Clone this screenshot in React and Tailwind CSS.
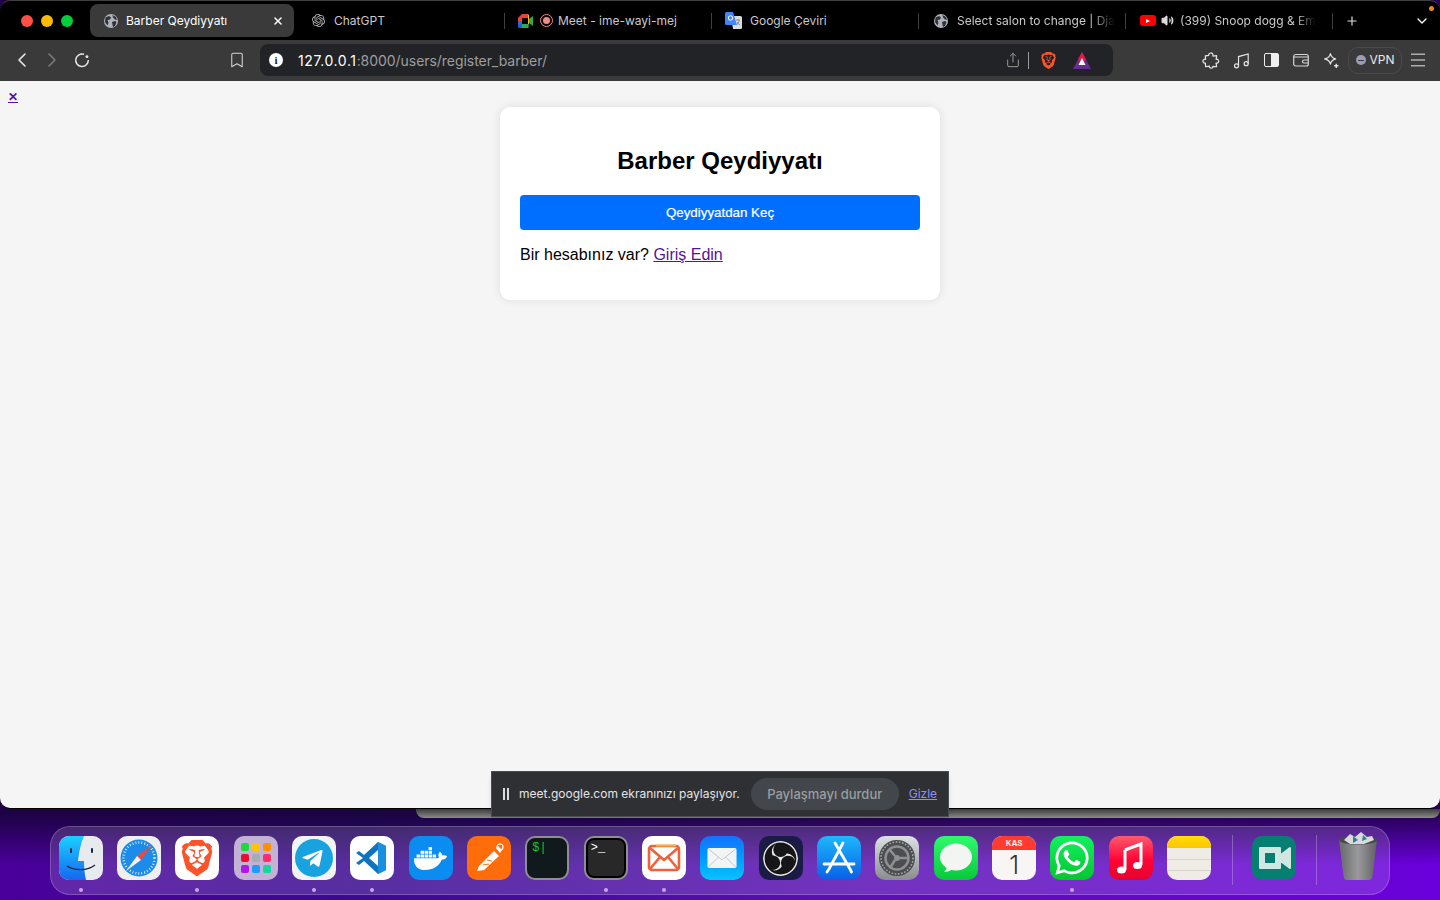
import React from 'react'
import { ChevronLeft, ChevronRight, ChevronDown, Bookmark, Share, Menu, Plus, X, Volume2 } from 'lucide-react'
import { FaDocker, FaWhatsapp, FaTelegramPlane } from 'react-icons/fa'
import { SiBrave, SiOpenai, SiObsstudio } from 'react-icons/si'

const sans = 'font-["Inter","Noto_Sans",sans-serif]'

const Globe = () => (
  <svg width="16" height="16" viewBox="0 0 16 16">
    <circle cx="8" cy="8" r="7" fill="#aeb2bb" />
    <path d="M2.500 4.500 6 3l2 1.500-1 2-2.500 .5 1 2.500-1 3L2 9zM9.500 2 13 4l1 3-2-.5-2-2zM9 9l3-1 1.500 1-1.500 4-2 1z" fill="#2f3136" />
  </svg>
)

const MeetLogo = () => (
  <svg width="16" height="14" viewBox="0 0 16 14">
    <path d="M0 4 4 0h6v4H4v3H0z" fill="#ea4335" />
    <path d="M0 7h4v3H0z" fill="#1a73e8" />
    <path d="M0 10h4v4H1.500A1.500 1.500 0 0 1 0 12.500z" fill="#1967d2" />
    <path d="M4 10h6v4H4z" fill="#34a853" />
    <path d="M10 0v4h1V1.500A1.500 1.500 0 0 0 9.500 0z" fill="#fbbc04" />
    <path d="M10 4h1v6h-1z" fill="#fbbc04" />
    <path d="M10 10h1v2.500a1.500 1.500 0 0 1-1.500 1.500H10z" fill="#188038" />
    <path d="M11 5l4-3v10l-4-3z" fill="#34a853" />
  </svg>
)

const TranslateLogo = () => (
  <svg width="17" height="17" viewBox="0 0 17 17">
    <path d="M6 4h9.500A1.500 1.500 0 0 1 17 5.500v10a1.500 1.500 0 0 1-1.500 1.500H8z" fill="#dadce0" />
    <path d="M1.500 0H8l4 13H1.500A1.500 1.500 0 0 1 0 11.500v-10A1.500 1.500 0 0 1 1.500 0z" fill="#4285f4" />
    <path d="M11 8h4M13 7v1M11.500 13c1.500-1 2.500-3 2.700-5M12 10c.7 1.300 1.600 2.300 3 3" stroke="#80868b" strokeWidth="0.900" fill="none" />
    <circle cx="5.500" cy="6" r="2.200" fill="none" stroke="#fff" strokeWidth="1" />
  </svg>
)

const tabClass = 'flex h-[16px] w-[207px] shrink-0 items-center border-r border-[#3f3f41]'

const TabBar = () => (
  <div className={`${sans} flex h-[40px] items-center rounded-t-[10px] border-t border-[#3f3f41] bg-black pl-[21px]`}>
    <div className="flex w-[69px] gap-2">
      <span className="h-3 w-3 rounded-full bg-[#ff4f46]" />
      <span className="h-3 w-3 rounded-full bg-[#ffbb00]" />
      <span className="h-3 w-3 rounded-full bg-[#00cf3b]" />
    </div>
    <div className="flex h-[33px] w-[204px] items-center rounded-lg bg-[#3a3a3b] pl-[13px] pr-[10px]">
      <Globe />
      <span className="ml-[7px] flex-1 text-[12px] text-white">Barber Qeydiyyatı</span>
      <X size={12} strokeWidth={3} color="#fff" />
    </div>
    <div className="ml-1 flex items-center">
      <div className={`${tabClass} pl-[14px]`}>
        <SiOpenai size={13} color="#b9b9bb" className="mr-[9px]" />
        <span className="text-[12px] text-[#c9c9cb]">ChatGPT</span>
      </div>
      <div className={`${tabClass} pl-[13px]`}>
        <MeetLogo />
        <span className="ml-[6px] mr-[5px] flex h-[13px] w-[13px] items-center justify-center rounded-full border border-[#f28b82]"><span className="h-[7px] w-[7px] rounded-full bg-[#f28b82]" /></span>
        <span className="text-[12px] text-[#c9c9cb]">Meet - ime-wayi-mej</span>
      </div>
      <div className={`${tabClass} pl-[13px]`}>
        <TranslateLogo />
        <span className="ml-[8px] text-[12px] text-[#c9c9cb]">Google Çeviri</span>
      </div>
      <div className={`${tabClass} pl-[14px]`}>
        <Globe />
        <span className="ml-2 whitespace-nowrap text-[12px] text-[#c9c9cb] mask-r-from-85%">Select salon to change | Dja</span>
      </div>
      <div className={`${tabClass} pl-[14px]`}>
        <span className="flex h-[11px] w-[16px] items-center justify-center rounded-[3px] bg-[#ff0000]"><span className="h-0 w-0 border-y-[2.500px] border-l-[4px] border-y-transparent border-l-white" /></span>
        <Volume2 size={13} color="#ddd" fill="#ddd" className="ml-[5px] mr-[6px]" />
        <span className="whitespace-nowrap text-[12px] text-[#c9c9cb] mask-r-from-85%">(399) Snoop dogg &amp; Em</span>
      </div>
    </div>
    <Plus size={14} color="#ddd" className="ml-3" />
    <ChevronDown size={16} color="#fff" className="ml-[55px]" />
  </div>
)

const ToolBtn = ({ children }) => <div className="flex h-[30px] w-[30px] shrink-0 items-center justify-center">{children}</div>

const Reload = () => (
  <svg width="18" height="18" viewBox="0 0 16 16" fill="none" stroke="#e8e8e8" strokeWidth="1.300">
    <path d="M9.800 2.900A5.600 5.600 0 1 0 13.600 8" />
    <circle cx="12.400" cy="5" r="1.300" fill="#e8e8e8" stroke="none" />
  </svg>
)

const PuzzleIcon = () => (
  <svg width="18" height="18" viewBox="0 0 16 16" fill="none" stroke="#e6e6e7" strokeWidth="1.100" strokeLinejoin="round">
    <path d="M6 3.800C5.800 1.300 9.800 1 9.700 3.500L9.800 4.500 13 4.200 12.600 7.400C14.800 6.900 15.500 9.800 13.800 10.700 13.300 11 12.900 10.900 12.500 10.700L13 14 9.700 13.700C10.200 15.600 6.800 15.900 6.500 13.900L6.600 13.500 3.200 14 3 10.700C.8 11.100 .2 8.300 1.700 7.500 2.200 7.200 2.700 7.300 3.100 7.500L3 4.300z" />
  </svg>
)

const MusicIcon = () => (
  <svg width="17" height="17" viewBox="0 0 16 16" fill="none" stroke="#e6e6e7" strokeWidth="1.100">
    <path d="M5.200 13V4.300L14.300 1.800V11" />
    <circle cx="3.300" cy="13" r="1.900" />
    <circle cx="12.400" cy="11" r="1.900" />
  </svg>
)

const Wallet = () => (
  <svg width="16" height="14" viewBox="0 0 16 14" fill="none" stroke="#d5d5d6" strokeWidth="1.200">
    <rect x="0.700" y="1.500" width="14.600" height="11.500" rx="2" />
    <path d="M1 4h14M15 7h-4a1.500 1.500 0 0 0 0 3h4" />
  </svg>
)

const Sparkle = () => (
  <svg width="17" height="17" viewBox="0 0 16 16" fill="none" stroke="#e6e6e7" strokeWidth="1.100">
    <path d="M7 1.500c.6 3 1.800 4.300 5 5-3.200.7-4.400 2-5 5-.6-3-1.800-4.300-5.500-5 3.700-.7 4.900-2 5.500-5z" strokeLinejoin="round" />
    <path d="M12.500 11v4M10.500 13h4" strokeWidth="1.300" />
  </svg>
)

const Toolbar = () => (
  <div className={`${sans} flex h-[41px] items-center bg-[#3a3a3b] pb-px pl-[7px]`}>
    <ToolBtn><ChevronLeft size={24} color="#e8e8e8" strokeWidth={1.600} /></ToolBtn>
    <ToolBtn><ChevronRight size={24} color="#7a7a7b" strokeWidth={1.600} /></ToolBtn>
    <ToolBtn><Reload /></ToolBtn>
    <div className="ml-[125px]"><ToolBtn><Bookmark size={18} color="#d5d5d6" strokeWidth={1.400} /></ToolBtn></div>
    <div className="ml-2 flex h-[32px] w-[853px] shrink-0 items-center rounded-lg bg-[#222326] pl-[9px]">
      <span className="flex h-[14px] w-[14px] items-center justify-center rounded-full bg-white font-['Liberation_Serif',serif] text-[11px] font-bold leading-none text-[#222326]">i</span>
      <span className="ml-[15px] text-[14px] tracking-[0.6px] text-white">127.0.0.1<span className="tracking-[-0.05px] text-[#9d9ea0]">:8000/users/register_barber/</span></span>
      <div className="ml-auto flex items-center">
        <Share size={16} color="#a0a1a3" strokeWidth={1.400} />
        <span className="ml-[7px] h-[17px] w-px bg-[#9a9b9d]" />
        <SiBrave size={17} color="#fb542b" className="ml-[11px]" />
        <svg width="18" height="17" viewBox="0 0 18 17" className="ml-[16px] mr-[22px]">
          <path d="M9 0 18 17H0z" fill="#662d91" />
          <path d="M9 0 13.500 8.500H4.500z" fill="#e6194b" />
          <path d="M9 6l3.500 7h-7z" fill="#fff" />
        </svg>
      </div>
    </div>
    <div className="ml-[83px] flex items-center">
      <ToolBtn><PuzzleIcon /></ToolBtn>
      <ToolBtn><MusicIcon /></ToolBtn>
      <ToolBtn>
        <span className="flex h-[14px] w-[15px] rounded-[2px] border-[1.500px] border-[#efefef]"><span className="w-1/2" /><span className="w-1/2 bg-[#efefef]" /></span>
      </ToolBtn>
      <ToolBtn><Wallet /></ToolBtn>
      <ToolBtn><Sparkle /></ToolBtn>
    </div>
    <div className="ml-[2px] flex h-[27px] w-[54px] shrink-0 items-center justify-center gap-1 rounded-[10px] border border-[#4a4a4b]">
      <span className="flex h-[10px] w-[10px] items-center justify-center rounded-full bg-[#9a9db8]"><span className="h-px w-[6px] bg-[#3a3a3b]" /></span>
      <span className="text-[12px] text-[#e8e8e9]">VPN</span>
    </div>
    <div className="ml-px"><ToolBtn><Menu size={20} color="#e8e8e8" strokeWidth={1.200} /></ToolBtn></div>
  </div>
)

const Finder = () => (
  <svg viewBox="0 0 44 44" className="h-11 w-11">
    <defs>
      <linearGradient id="fb" x1="0" y1="0" x2="0" y2="1"><stop offset="0" stopColor="#1bd0ff" /><stop offset="1" stopColor="#1567ef" /></linearGradient>
    </defs>
    <rect width="44" height="44" rx="10" fill="#e8ebee" />
    <path d="M10 0h15c-3 7-5 15-6 25h6c0 6 .5 13 2 19H10A10 10 0 0 1 0 34V10A10 10 0 0 1 10 0z" fill="url(#fb)" />
    <rect x="11" y="12" width="2" height="5" rx="1" fill="#12263f" />
    <rect x="32" y="12" width="2" height="5" rx="1" fill="#12263f" />
    <path d="M8 30c8 5 20 5 28-1" fill="none" stroke="#12263f" strokeWidth="1.300" />
  </svg>
)

const Safari = () => (
  <svg viewBox="0 0 44 44" className="h-11 w-11">
    <rect width="44" height="44" rx="10" fill="#eef0f0" />
    <circle cx="22" cy="22" r="18.500" fill="#1d8bea" />
    <circle cx="22" cy="22" r="15.500" fill="none" stroke="#fff" strokeWidth="2.500" strokeDasharray="0.800 2.200" />
    <path d="M35 9 24 24 20 20z" fill="#f0473c" />
    <path d="M9 35 20 20l4 4z" fill="#f4f4f4" />
  </svg>
)

const Launchpad = () => {
  const colors = ['#1ed83f', '#ffc400', '#ff9100', '#e8112d', '#a7acb2', '#ff2d6b', '#b416e8', '#1b9dfb', '#0fd9a0']
  return (
    <div className="grid h-11 w-11 grid-cols-3 content-center justify-center gap-[3px] rounded-[10px] bg-[#c2b3d6] px-[7px]">
      {colors.map((c) => <span key={c} className="h-[8px] w-[8px] rounded-[2px]" style={{ background: c }} />)}
    </div>
  )
}

const Telegram = () => (
  <div className="flex h-11 w-11 items-center justify-center rounded-[10px] bg-[#f2f3f3]">
    <div className="flex h-[38px] w-[38px] items-center justify-center rounded-full bg-[#18a3e0]"><FaTelegramPlane size={23} color="#fff" className="-ml-[2px]" /></div>
  </div>
)

const VsCode = () => (
  <svg viewBox="0 0 44 44" className="h-11 w-11">
    <rect width="44" height="44" rx="10" fill="#fff" />
    <path d="M28 6 36 10v24l-8 4L14 25l-5 4-3-2 7-5-7-5 3-2 5 4z" fill="#0f74c0" />
    <path d="M28 6 36 10v24l-8 4V15l-9 7 9 7" fill="#1a8fe0" />
    <path d="M28 14v16l-9-8z" fill="#fff" />
  </svg>
)

const Docker = () => <div className="flex h-11 w-11 items-center justify-center rounded-[10px] bg-[#0a8cf0]"><FaDocker size={33} color="#fff" /></div>

const Postman = () => (
  <svg viewBox="0 0 44 44" className="h-11 w-11">
    <rect width="44" height="44" rx="10" fill="#ff6c0a" />
    <path d="M10 35 12 30 27 15l5 5-15 14zM29 12l2-2 4 4-2 3z" fill="#fff" />
    <circle cx="33" cy="11" r="3" fill="none" stroke="#fff" strokeWidth="1.200" />
    <path d="M16 29l6-1M20 24l5 1" stroke="#ff6c0a" strokeWidth="1" />
  </svg>
)

const Term = ({ text, color, ring, inner }) => (
  <div className={`h-11 w-11 rounded-[10px] border-2 border-[#8c9090] ${ring} p-[2px]`}>
    <div className={`h-full rounded-[6px] ${inner} px-[3px] pt-[2px] font-['Liberation_Mono',monospace] text-[12px] leading-[12px] ${color}`}>{text}</div>
  </div>
)

const Mailspring = () => (
  <svg viewBox="0 0 44 44" className="h-11 w-11">
    <rect width="44" height="44" rx="10" fill="#fff" />
    <rect x="7" y="10" width="30" height="24" rx="3" fill="none" stroke="#f0613a" strokeWidth="2.600" />
    <path d="M8 12 22 24 36 12M8 33l10-12M36 33 26 21" fill="none" stroke="#f0613a" strokeWidth="2.600" />
    <path d="M14 9.500h20" stroke="#f3b53f" strokeWidth="2" />
  </svg>
)

const MailApp = () => (
  <div className="flex h-11 w-11 items-center justify-center rounded-[10px] bg-linear-to-b from-[#1670ff] to-[#0bc3ff]">
    <svg viewBox="0 0 32 22" className="h-[20px] w-[30px]">
      <rect width="32" height="22" rx="2" fill="#f3f4f6" />
      <path d="M1 1 16 13 31 1M1 21l11-11M31 21 20 10" fill="none" stroke="#bcc3cc" strokeWidth="1" />
    </svg>
  </div>
)

const Obs = () => (
  <div className="flex h-11 w-11 items-center justify-center rounded-[10px] bg-[#1b1c45]"><SiObsstudio size={35} color="#e9e9e9" className="rounded-full bg-[#161618]" /></div>
)

const AppStore = () => (
  <svg viewBox="0 0 44 44" className="h-11 w-11">
    <defs><linearGradient id="as" x1="0" y1="0" x2="0" y2="1"><stop offset="0" stopColor="#1cb8fb" /><stop offset="1" stopColor="#0a5fe8" /></linearGradient></defs>
    <rect width="44" height="44" rx="10" fill="url(#as)" />
    <path d="M26 7 12 33M18 7l15 26M7 28h30M12 33l-2 3M33 33l1.500 3" stroke="#fff" strokeWidth="2.800" strokeLinecap="round" fill="none" />
  </svg>
)

const Settings = () => (
  <svg viewBox="0 0 44 44" className="h-11 w-11">
    <defs><linearGradient id="st" x1="0" y1="0" x2="0" y2="1"><stop offset="0" stopColor="#dde1e4" /><stop offset="1" stopColor="#8a8d90" /></linearGradient></defs>
    <rect width="44" height="44" rx="10" fill="url(#st)" />
    <circle cx="22" cy="22" r="18" fill="#4c4d50" />
    <circle cx="22" cy="22" r="16" fill="none" stroke="#a8a9ab" strokeWidth="1.500" strokeDasharray="1.600 1.600" />
    <circle cx="22" cy="22" r="11.500" fill="none" stroke="#8f9092" strokeWidth="2.500" />
    <circle cx="22" cy="22" r="3" fill="#8f9092" />
    <path d="M20 20 14 13M25 22h9M20 24l-5 8" stroke="#8f9092" strokeWidth="2.500" />
  </svg>
)

const Messages = () => (
  <svg viewBox="0 0 44 44" className="h-11 w-11">
    <defs><linearGradient id="ms" x1="0" y1="0" x2="0" y2="1"><stop offset="0" stopColor="#2dfb6c" /><stop offset="1" stopColor="#07c93a" /></linearGradient></defs>
    <rect width="44" height="44" rx="10" fill="url(#ms)" />
    <ellipse cx="22" cy="21" rx="16" ry="13.500" fill="#f2f5f2" />
    <path d="M13 29c0 3-1 5-3 7 4 0 8-2 10-4z" fill="#f2f5f2" />
  </svg>
)

const Calendar = () => (
  <div className={`${sans} flex h-11 w-11 flex-col overflow-hidden rounded-[10px] bg-[#f7f6f4]`}>
    <div className="flex h-[14px] items-center justify-center bg-[#ff3b30] text-[8px] font-bold text-[#ffe9e7]">KAS</div>
    <div className="flex flex-1 items-center justify-center text-[25px] font-light leading-none text-[#333]">1</div>
  </div>
)

const WhatsApp = () => (
  <div className="flex h-11 w-11 items-center justify-center rounded-[10px] bg-linear-to-b from-[#13f05f] to-[#05c52f]"><FaWhatsapp size={38} color="#fff" /></div>
)

const AppleMusic = () => (
  <svg viewBox="0 0 44 44" className="h-11 w-11">
    <defs><linearGradient id="am" x1="0" y1="0" x2="0" y2="1"><stop offset="0" stopColor="#ff5a6e" /><stop offset="0.550" stopColor="#ff0436" /><stop offset="1" stopColor="#e4022f" /></linearGradient></defs>
    <rect width="44" height="44" rx="10" fill="url(#am)" />
    <path d="M16 14 32 8V29" fill="none" stroke="#fff" strokeWidth="3" />
    <path d="M16 14V34" stroke="#fff" strokeWidth="3" />
    <ellipse cx="12.500" cy="34" rx="4.500" ry="3.500" fill="#fff" />
    <ellipse cx="28.500" cy="29.500" rx="4.500" ry="3.500" fill="#fff" />
  </svg>
)

const Notes = () => (
  <div className="flex h-11 w-11 flex-col overflow-hidden rounded-[10px] bg-[#efece6]">
    <div className="h-[12px] bg-linear-to-b from-[#ffdc00] to-[#fdc500]" />
    <div className="mt-[11px] h-px bg-[#d8d5cf]" />
    <div className="mt-[10px] h-px bg-[#d8d5cf]" />
  </div>
)

const MeetDock = () => (
  <svg viewBox="0 0 44 44" className="h-11 w-11">
    <rect width="44" height="44" rx="10" fill="#077e72" />
    <path d="M8 12h20v7.500L38 12v20l-10-7.500V32H8z" fill="#cfe8e2" strokeLinejoin="round" stroke="#cfe8e2" strokeWidth="2" />
    <rect x="13" y="17" width="10" height="10" fill="#077e72" />
  </svg>
)

const Trash = () => (
  <svg viewBox="0 0 44 50" className="-mt-[5px] h-[50px] w-11">
    <defs><linearGradient id="tr" x1="0" y1="0" x2="1" y2="0"><stop offset="0" stopColor="#67686b" /><stop offset="0.500" stopColor="#9a9a9c" /><stop offset="1" stopColor="#5f6064" /></linearGradient></defs>
    <path d="M3 9h38l-4.500 36c-.3 2.500-1.500 4-3.500 4H11c-2 0-3.200-1.500-3.500-4z" fill="url(#tr)" />
    <ellipse cx="22" cy="9" rx="19" ry="4.500" fill="#48494d" />
    <path d="M8 9l6-6 5 3 6-5 6 5 5-1 2 4-10 4H14z" fill="#d8dadc" />
    <path d="M17 5l5 4-5 3zM27 4l4 4-5 2z" fill="#2f7f98" />
  </svg>
)

const DockItem = ({ children, running }) => (
  <div className="flex w-11 flex-col items-center">
    {children}
    <span className={`mt-2 h-1 w-1 rounded-full ${running ? 'bg-[#c9a4f2]' : ''}`} />
  </div>
)

const Dock = () => (
  <div className="ml-[50px] flex h-[69px] w-[1340px] items-start rounded-[20px] border border-white/20 bg-white/15 pl-[7.600px] pt-[9px]">
    <div className="flex gap-[14.350px]">
      <DockItem running><Finder /></DockItem>
      <DockItem><Safari /></DockItem>
      <DockItem running><div className="flex h-11 w-11 items-center justify-center rounded-[10px] bg-white"><SiBrave size={36} color="#fb542b" /></div></DockItem>
      <DockItem><Launchpad /></DockItem>
      <DockItem running><Telegram /></DockItem>
      <DockItem running><VsCode /></DockItem>
      <DockItem><Docker /></DockItem>
      <DockItem><Postman /></DockItem>
      <DockItem><Term text="$|" color="text-[#19c72c]" ring="bg-[#101a1c]" inner="bg-[#101a1c]" /></DockItem>
      <DockItem running><Term text=">_" color="text-white" ring="bg-black" inner="bg-[#282828]" /></DockItem>
      <DockItem running><Mailspring /></DockItem>
      <DockItem><MailApp /></DockItem>
      <DockItem><Obs /></DockItem>
      <DockItem><AppStore /></DockItem>
      <DockItem><Settings /></DockItem>
      <DockItem><Messages /></DockItem>
      <DockItem><Calendar /></DockItem>
      <DockItem running><WhatsApp /></DockItem>
      <DockItem><AppleMusic /></DockItem>
      <DockItem><Notes /></DockItem>
    </div>
    <span className="ml-[21px] mt-[-1px] h-[50px] w-px bg-white/25" />
    <div className="ml-[19px]"><MeetDock /></div>
    <span className="ml-[20px] mt-[-1px] h-[50px] w-px bg-white/25" />
    <div className="ml-[19px]"><Trash /></div>
  </div>
)

const ShareBar = () => (
  <div className={`${sans} absolute left-[491px] top-[771px] flex h-[46px] w-[458px] items-center border border-[#4a4d4f] bg-[#2f3033] pl-[11px] shadow-md`}>
    <span className="h-[12px] w-[6px] border-x-2 border-[#dcdcdc]" />
    <span className="ml-[10px] text-[12px] text-[#e4e4e4]">meet.google.com ekranınızı paylaşıyor.</span>
    <span className="ml-[11px] flex h-[32px] w-[148px] items-center justify-center rounded-[16px] bg-[#43474b] pt-px text-[13px] font-medium text-[#9a9da0]">Paylaşmayı durdur</span>
    <span className="ml-[10px] text-[12px] text-[#8f8ff5] underline">Gizle</span>
  </div>
)

export default function App() {
  return (
    <div className="relative h-[900px] w-[1440px] overflow-hidden bg-[linear-gradient(to_bottom,rgba(15,2,40,0.75)_815px,rgba(15,2,40,0)_865px),linear-gradient(90deg,#4a009c_0%,#3a0a90_25%,#5a10b4_60%,#6a00dc_100%)]">
      <div className="rounded-b-[10px] border-b border-black">
        <TabBar />
        <Toolbar />
        <div className="h-[727px] rounded-b-[10px] bg-[#f5f5f5] font-['Liberation_Sans',Arial,sans-serif]">
          <div className="h-[26px] pl-2 pt-[9px]">
            <a href="#" className="block w-[10px] text-[12px] font-bold leading-[14px] text-[#5a0f9c] underline">✕</a>
          </div>
          <div className="mx-auto w-[440px] rounded-[10px] bg-white px-5 pb-[36px] pt-[40px] shadow-[0_0_10px_rgba(0,0,0,0.1)]">
            <h1 className="text-center text-[24px] font-bold leading-[28px] text-black">Barber Qeydiyyatı</h1>
            <button className="mt-5 h-[35px] w-full rounded-[4px] bg-[#006eff] text-[13.330px] text-white [-webkit-text-stroke:0.2px_white]">Qeydiyyatdan Keç</button>
            <p className="mt-4 text-[16px] leading-[18px] text-black">Bir hesabınız var? <a href="#" className="text-[#5a0f9c] underline">Giriş Edin</a></p>
          </div>
        </div>
      </div>
      <div className="ml-[416px] h-[9px] rounded-b-[8px] bg-[linear-gradient(to_bottom,#3c3c3c,#8b8b8b)]" />
      <div className="mt-2"><Dock /></div>
      <span className="absolute left-[1429px] top-[6px] h-[5px] w-[5px] rounded-full bg-[#e8891c]" />
      <ShareBar />
    </div>
  )
}
